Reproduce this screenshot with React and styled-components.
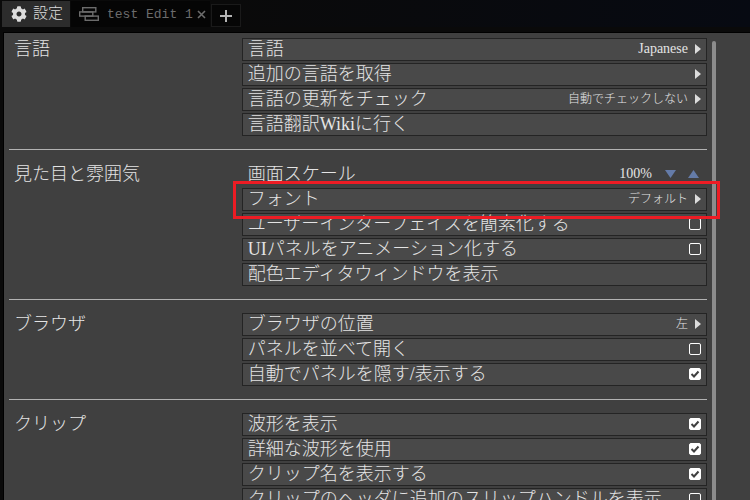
import React from "react";
import styled, { createGlobalStyle } from "styled-components";
import { FaCog } from "react-icons/fa";

const GlobalStyle = createGlobalStyle`
  * {
    box-sizing: border-box;
  }

  body {
    margin: 0;
    background: #0a0a0a;
    color: #e4e4e4;
    font-family: "Liberation Serif", "Noto Sans CJK JP", serif;
    font-size: 18px;
    font-weight: 300;
  }

  button,
  input {
    margin: 0;
    font: inherit;
    color: inherit;
  }
`;

const Window = styled.div`
  display: flex;
  flex-direction: column;
  height: 100vh;
  overflow: hidden;
`;

const TabBar = styled.nav`
  display: flex;
  align-items: flex-end;
  gap: 1px;
  padding: 1px 2px 0;
  background: linear-gradient(to right, #0a0a0a 30%, #070a12);
`;
const Tab = styled.div`
  display: flex;
  align-items: center;
  gap: 4px;
  height: 26px;
  padding: ${(p) => (p.$active ? "0 7px 0 9px" : "0 4px 0 8px")};
  background: ${(p) => (p.$active ? "#2c2c2c" : "#050505")};
  color: ${(p) => (p.$active ? "#dcdcdc" : "#6c6c6c")};
`;
const TabButton = styled.button`
  display: flex;
  align-items: center;
  gap: ${(p) => p.$gap}px;
  padding: 0;
  border: 0;
  background: none;
  font-family: "Liberation Mono", "Noto Sans CJK JP", monospace;
  font-size: ${(p) => p.$size}px;
  line-height: 20px;
  white-space: nowrap;
`;
const TabLabel = styled.span`
  padding-top: 2px;
`;
const CloseButton = styled.button`
  display: flex;
  padding: 0;
  border: 0;
  background: none;
`;
const AddButton = styled.button`
  display: flex;
  align-items: center;
  justify-content: center;
  width: 30px;
  height: 23px;
  padding: 0;
  border: 1px solid #1a1a1a;
  background: #060606;
  color: #b4b4b4;
`;

const Panel = styled.main`
  display: flex;
  flex: 1;
  min-height: 0;
  margin: 5px 0 0 3px;
  padding: 0 34px 0 5px;
  border: solid #000;
  border-width: 1px 0 0 1px;
  background: #404040;
`;
const Settings = styled.div`
  flex: 1;
  min-width: 0;
`;
const ScrollThumb = styled.div`
  width: 4px;
  margin: 8px 0 0 5px;
  border-radius: 2px 2px 0 0;
  background: #8c8c8c;
`;

const Group = styled.section`
  display: grid;
  grid-template-columns: 1fr 2fr;
  padding: 13px 0;
  border-bottom: 1px solid #b2b2b2;

  &:first-child {
    padding-top: 5px;
  }
`;
const GroupTitle = styled.h2`
  margin: 0;
  padding-left: 5px;
  font-size: 18px;
  font-weight: 300;
  line-height: 23px;
`;
const Rows = styled.div`
  display: flex;
  flex-direction: column;
  gap: 2px;
`;
const Row = styled.div`
  position: relative;
  display: flex;
  align-items: center;
  gap: 7px;
  width: 100%;
  height: 23px;
  padding: 0 5px 1px;
  border: 1px solid ${(p) => (p.$plain ? "transparent" : "#242424")};
  background: ${(p) => (p.$plain ? "none" : "#494949")};
  line-height: 22px;
  text-align: left;
  white-space: nowrap;
`;
const RowText = styled.span`
  flex: 1;
`;
const Value = styled.span`
  font-size: ${(p) => p.$size || 12}px;
`;
const Highlight = styled.span`
  position: absolute;
  z-index: 1;
  inset: -8px -14px -9px -10px;
  border: 3px solid #ed1c24;
  pointer-events: none;
`;

const Stepper = styled.div`
  display: flex;
  gap: 12px;
  padding: 0 2px 0 6px;
`;
const StepButton = styled.button`
  display: flex;
  padding: 0;
  border: 0;
  background: none;
`;

const CheckBox = styled.span`
  position: relative;
  display: flex;

  svg {
    position: absolute;
    inset: 0;
    pointer-events: none;
  }
`;
const CheckInput = styled.input`
  appearance: none;
  width: 12px;
  height: 12px;
  border: 1px solid #fff;
  border-radius: 2px;

  &:checked {
    background: #fff;
  }
`;

const ClipIcon = () => (
  <svg width="20" height="14" viewBox="0 0 20 14" fill="none" stroke="currentColor" strokeWidth="1.4">
    <rect x="3.7" y="0.7" width="13.1" height="4.2" />
    <rect x="0.7" y="4.9" width="13.1" height="4.2" />
    <rect x="6.2" y="9.1" width="13.1" height="4.2" />
  </svg>
);

const RightArrow = () => (
  <svg width="6" height="10" viewBox="0 0 6 10" fill="#dcdcdc">
    <path d="M0 0L6 5L0 10z" />
  </svg>
);

function LinkRow({ label, value, size, arrow = true, highlight }) {
  return (
    <Row as="button" type="button">
      <RowText>{label}</RowText>
      {value && <Value $size={size}>{value}</Value>}
      {arrow && <RightArrow />}
      {highlight && <Highlight />}
    </Row>
  );
}

function CheckRow({ label, checked }) {
  return (
    <Row as="label">
      <RowText>{label}</RowText>
      <CheckBox>
        <CheckInput type="checkbox" defaultChecked={checked} />
        {checked && (
          <svg width="12" height="12" viewBox="0 0 12 12" fill="none" stroke="#404040" strokeWidth="2">
            <path d="M2.5 6L5 8.5L9.5 3.5" />
          </svg>
        )}
      </CheckBox>
    </Row>
  );
}

function ScaleRow() {
  return (
    <Row $plain>
      <RowText>画面スケール</RowText>
      <Value $size={14}>100%</Value>
      <Stepper>
        <StepButton type="button" aria-label="縮小">
          <svg width="11" height="8" viewBox="0 0 11 8" fill="#647ba8">
            <path d="M0 0H11L5.5 8z" />
          </svg>
        </StepButton>
        <StepButton type="button" aria-label="拡大">
          <svg width="11" height="8" viewBox="0 0 11 8" fill="#647ba8">
            <path d="M0 8H11L5.5 0z" />
          </svg>
        </StepButton>
      </Stepper>
    </Row>
  );
}

export default function App() {
  return (
    <Window>
      <GlobalStyle />
      <TabBar>
        <Tab $active>
          <TabButton type="button" $gap={6} $size={15}>
            <FaCog size={16} />
            <TabLabel>設定</TabLabel>
          </TabButton>
        </Tab>
        <Tab>
          <TabButton type="button" $gap={8} $size={13}>
            <ClipIcon />
            <TabLabel>test Edit 1</TabLabel>
          </TabButton>
          <CloseButton type="button" aria-label="閉じる">
            <svg width="9" height="9" viewBox="0 0 9 9" stroke="currentColor" strokeWidth="1.6">
              <path d="M1 1L8 8M8 1L1 8" />
            </svg>
          </CloseButton>
        </Tab>
        <AddButton type="button" aria-label="追加">
          <svg width="12" height="12" viewBox="0 0 12 12" stroke="currentColor" strokeWidth="2">
            <path d="M6 0V12M0 6H12" />
          </svg>
        </AddButton>
      </TabBar>
      <Panel>
        <Settings>
          <Group>
            <GroupTitle>言語</GroupTitle>
            <Rows>
              <LinkRow label="言語" value="Japanese" size={14} />
              <LinkRow label="追加の言語を取得" />
              <LinkRow label="言語の更新をチェック" value="自動でチェックしない" />
              <LinkRow label="言語翻訳Wikiに行く" arrow={false} />
            </Rows>
          </Group>
          <Group>
            <GroupTitle>見た目と雰囲気</GroupTitle>
            <Rows>
              <ScaleRow />
              <LinkRow label="フォント" value="デフォルト" highlight />
              <CheckRow label="ユーザーインターフェイスを簡素化する" />
              <CheckRow label="UIパネルをアニメーション化する" />
              <LinkRow label="配色エディタウィンドウを表示" arrow={false} />
            </Rows>
          </Group>
          <Group>
            <GroupTitle>ブラウザ</GroupTitle>
            <Rows>
              <LinkRow label="ブラウザの位置" value="左" />
              <CheckRow label="パネルを並べて開く" />
              <CheckRow label="自動でパネルを隠す/表示する" checked />
            </Rows>
          </Group>
          <Group>
            <GroupTitle>クリップ</GroupTitle>
            <Rows>
              <CheckRow label="波形を表示" checked />
              <CheckRow label="詳細な波形を使用" checked />
              <CheckRow label="クリップ名を表示する" checked />
              <CheckRow label="クリップのヘッダに追加のスリップハンドルを表示" />
            </Rows>
          </Group>
        </Settings>
        <ScrollThumb />
      </Panel>
    </Window>
  );
}
